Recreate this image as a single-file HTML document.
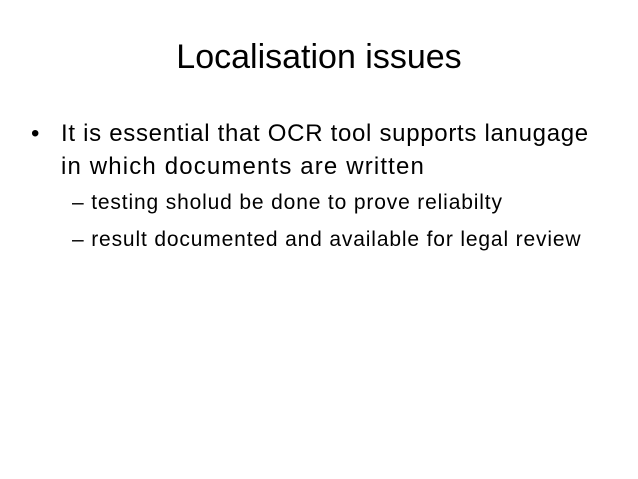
<!DOCTYPE html>
<html><head><style>
body{margin:0;width:638px;height:479px;background:#fff;font-family:"Liberation Sans",sans-serif;color:#000;position:relative;overflow:hidden}
div{position:absolute;white-space:nowrap}
</style></head><body>
<div style="left:0;width:638px;text-align:center;top:38px;font-size:34px;">Localisation issues</div>
<div style="left:31px;top:120px;font-size:24px;">•</div>
<div style="left:61px;top:120px;font-size:24px;letter-spacing:0.7px;">It is essential that OCR tool supports lanugage</div>
<div style="left:61px;top:153px;font-size:24px;letter-spacing:1.15px;">in which documents are written</div>
<div style="left:72px;top:191px;font-size:21px;letter-spacing:0.85px;">– testing sholud be done to prove reliabilty</div>
<div style="left:72px;top:228px;font-size:21px;letter-spacing:0.85px;">– result documented and available for legal review</div>
</body></html>
